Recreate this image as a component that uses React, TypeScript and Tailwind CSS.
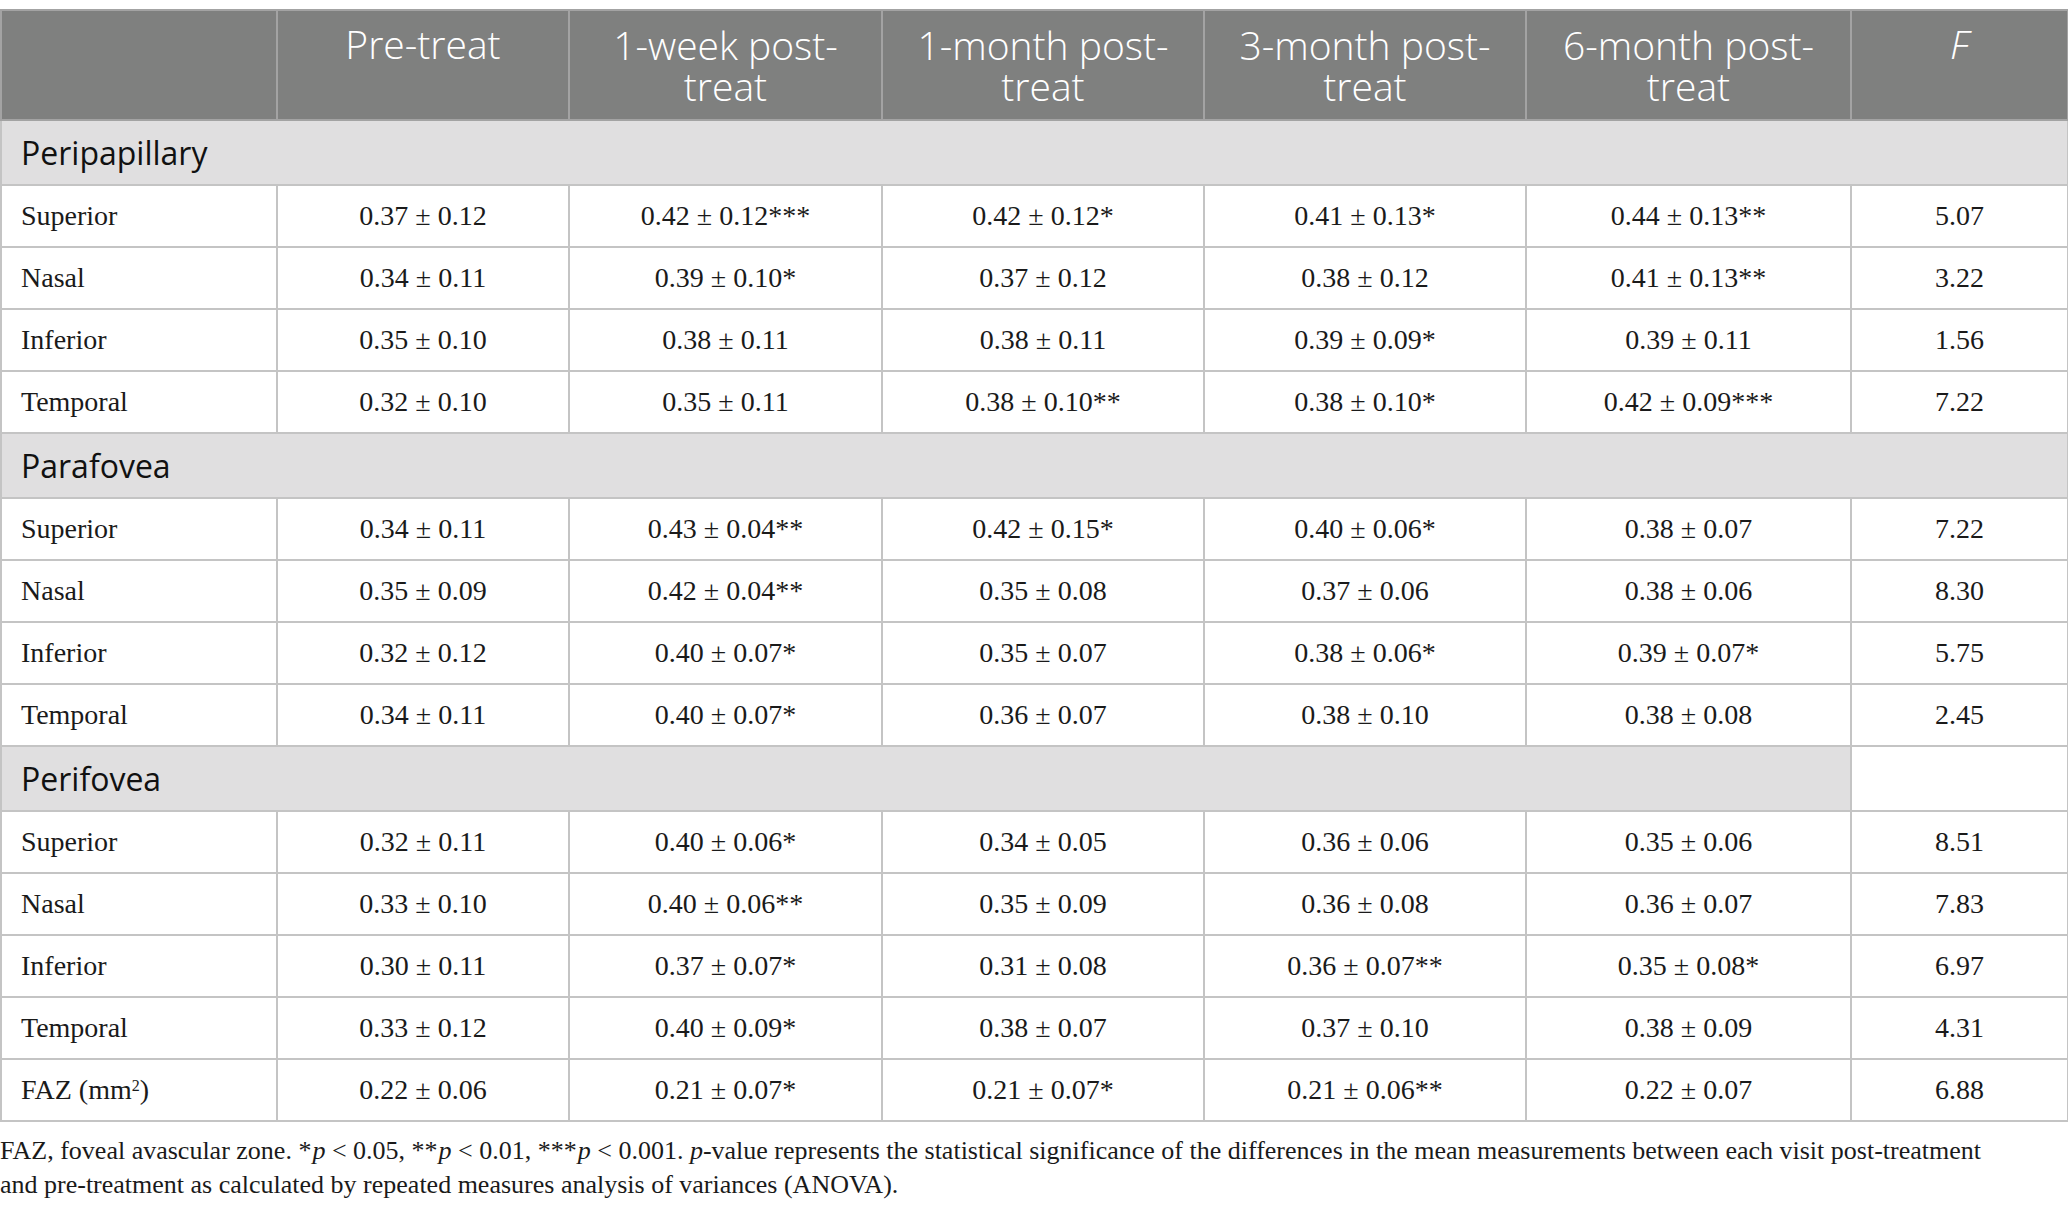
type Row = { label: string; cells: string[]; f: string };
type Section = { title: string; fullGray: boolean; rows: Row[] };

const sections: Section[] = [
  {
    title: "Peripapillary",
    fullGray: true,
    rows: [
      { label: "Superior", cells: ["0.37 ± 0.12", "0.42 ± 0.12***", "0.42 ± 0.12*", "0.41 ± 0.13*", "0.44 ± 0.13**"], f: "5.07" },
      { label: "Nasal", cells: ["0.34 ± 0.11", "0.39 ± 0.10*", "0.37 ± 0.12", "0.38 ± 0.12", "0.41 ± 0.13**"], f: "3.22" },
      { label: "Inferior", cells: ["0.35 ± 0.10", "0.38 ± 0.11", "0.38 ± 0.11", "0.39 ± 0.09*", "0.39 ± 0.11"], f: "1.56" },
      { label: "Temporal", cells: ["0.32 ± 0.10", "0.35 ± 0.11", "0.38 ± 0.10**", "0.38 ± 0.10*", "0.42 ± 0.09***"], f: "7.22" },
    ],
  },
  {
    title: "Parafovea",
    fullGray: true,
    rows: [
      { label: "Superior", cells: ["0.34 ± 0.11", "0.43 ± 0.04**", "0.42 ± 0.15*", "0.40 ± 0.06*", "0.38 ± 0.07"], f: "7.22" },
      { label: "Nasal", cells: ["0.35 ± 0.09", "0.42 ± 0.04**", "0.35 ± 0.08", "0.37 ± 0.06", "0.38 ± 0.06"], f: "8.30" },
      { label: "Inferior", cells: ["0.32 ± 0.12", "0.40 ± 0.07*", "0.35 ± 0.07", "0.38 ± 0.06*", "0.39 ± 0.07*"], f: "5.75" },
      { label: "Temporal", cells: ["0.34 ± 0.11", "0.40 ± 0.07*", "0.36 ± 0.07", "0.38 ± 0.10", "0.38 ± 0.08"], f: "2.45" },
    ],
  },
  {
    title: "Perifovea",
    fullGray: false,
    rows: [
      { label: "Superior", cells: ["0.32 ± 0.11", "0.40 ± 0.06*", "0.34 ± 0.05", "0.36 ± 0.06", "0.35 ± 0.06"], f: "8.51" },
      { label: "Nasal", cells: ["0.33 ± 0.10", "0.40 ± 0.06**", "0.35 ± 0.09", "0.36 ± 0.08", "0.36 ± 0.07"], f: "7.83" },
      { label: "Inferior", cells: ["0.30 ± 0.11", "0.37 ± 0.07*", "0.31 ± 0.08", "0.36 ± 0.07**", "0.35 ± 0.08*"], f: "6.97" },
      { label: "Temporal", cells: ["0.33 ± 0.12", "0.40 ± 0.09*", "0.38 ± 0.07", "0.37 ± 0.10", "0.38 ± 0.09"], f: "4.31" },
    ],
  },
];

const faz = { cells: ["0.22 ± 0.06", "0.21 ± 0.07*", "0.21 ± 0.07*", "0.21 ± 0.06**", "0.22 ± 0.07"], f: "6.88" };

const sans = "font-['Open_Sans','Noto_Sans',sans-serif]";
const serif = "font-['Liberation_Serif','DejaVu_Serif',serif]";

const td = "border-2 border-[#c4c4c4] h-[62px] text-center align-middle";

export default function App() {
  return (
    <div className="w-[2068px] h-[1215px] bg-white text-[#1a1a1a] pt-[9px]">
      <table className="table-fixed border-collapse w-[2067px]">
        <colgroup>
          <col className="w-[276px]" />
          <col className="w-[292px]" />
          <col className="w-[313px]" />
          <col className="w-[322px]" />
          <col className="w-[322px]" />
          <col className="w-[325px]" />
          <col className="w-[217px]" />
        </colgroup>
        <thead>
          <tr className={`bg-[#7f807f] text-white ${sans} font-light text-[39px] leading-[41px]`}>
            <th className="border-2 border-[#a3a3a3] h-[110px]" />
            <th className="border-2 border-[#a3a3a3] font-light align-top pt-[12px]">Pre-treat</th>
            <th className="border-2 border-[#a3a3a3] font-light px-4">1-week post-treat</th>
            <th className="border-2 border-[#a3a3a3] font-light px-4">1-month post-treat</th>
            <th className="border-2 border-[#a3a3a3] font-light px-4">3-month post-treat</th>
            <th className="border-2 border-[#a3a3a3] font-light px-4">6-month post-treat</th>
            <th className="border-2 border-[#a3a3a3] font-light italic align-top pt-[12px]">F</th>
          </tr>
        </thead>
        <tbody className={`${serif} text-[28px]`}>
          {sections.map((s) => (
            <>
              <tr key={s.title}>
                <td
                  colSpan={s.fullGray ? 7 : 6}
                  className={`border-2 border-[#c4c4c4] bg-[#e0dfe0] h-[65px] pl-[19px] ${sans} text-[32px] text-[#111]`}
                >
                  {s.title}
                </td>
                {!s.fullGray && <td className="border-2 border-[#c4c4c4] bg-white" />}
              </tr>
              {s.rows.map((r) => (
                <tr key={s.title + r.label}>
                  <td className={`${td} text-left pl-[19px]`}>{r.label}</td>
                  {r.cells.map((c, i) => (
                    <td key={i} className={td}>
                      {c}
                    </td>
                  ))}
                  <td className={td}>{r.f}</td>
                </tr>
              ))}
            </>
          ))}
          <tr>
            <td className={`${td} text-left pl-[19px]`}>
              FAZ (mm<sup className="text-[16px]">2</sup>)
            </td>
            {faz.cells.map((c, i) => (
              <td key={i} className={td}>
                {c}
              </td>
            ))}
            <td className={td}>{faz.f}</td>
          </tr>
        </tbody>
      </table>
      <p className={`${serif} text-[26px] leading-[34px] mt-[12px] w-[1985px]`}>
        FAZ, foveal avascular zone. *<i className="pl-[1px]">p</i> &lt; 0.05, **<i className="pl-[1px]">p</i> &lt; 0.01,
        ***<i className="pl-[1px]">p</i> &lt; 0.001. <i>p</i>-value represents the statistical significance of the
        differences in the mean measurements between each visit post‑treatment and pre-treatment as calculated by
        repeated measures analysis of variances (ANOVA).
      </p>
    </div>
  );
}
